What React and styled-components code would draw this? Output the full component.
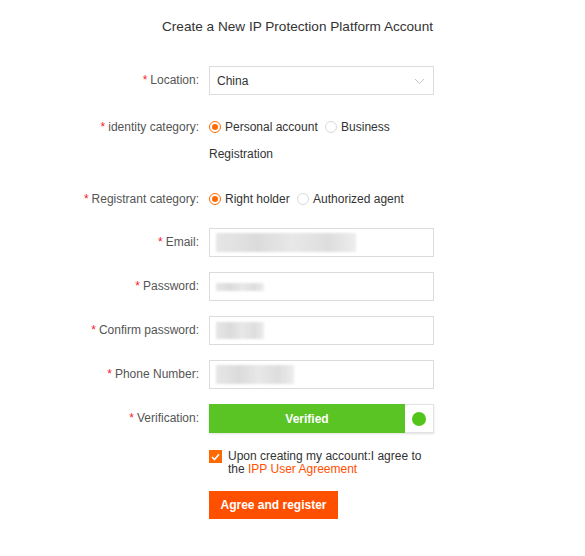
import React, { useState } from "react";
import styled, { createGlobalStyle } from "styled-components";

const GlobalStyle = createGlobalStyle`
  body {
    margin: 0;
    background: #ffffff;
    font-family: "Liberation Sans", Arial, sans-serif;
  }
`;

const Page = styled.div`
  width: 585px;
  height: 556px;
  background: #fff;
  overflow: hidden;
`;

const Title = styled.h1`
  margin: 17px 0 0 162px;
  font-size: 13.6px;
  line-height: 20px;
  font-weight: normal;
  color: #333;
`;

const Form = styled.form`
  display: flex;
  flex-direction: column;
  margin-top: 29px;
`;

const Row = styled.div`
  display: flex;
  align-items: ${(p) => (p.$top ? "flex-start" : "center")};
  margin-top: ${(p) => p.$mt ?? 15}px;
  min-height: 29px;
`;

const Label = styled.label`
  width: 199px;
  padding-right: 10px;
  flex: none;
  text-align: right;
  font-size: 12px;
  color: #555;
  line-height: ${(p) => p.$lh ?? 29}px;

  &::before {
    content: "*";
    color: #f5222d;
    margin-right: 3px;
  }
`;

const Control = styled.div`
  width: 225px;
  flex: none;
`;

const Select = styled.div`
  height: 29px;
  box-sizing: border-box;
  border: 1px solid #dcdcdc;
  display: flex;
  align-items: center;
  justify-content: space-between;
  padding: 1px 8px 0 7px;
  font-size: 12px;
  color: #333;
`;

const Input = styled.div`
  height: 29px;
  box-sizing: border-box;
  border: 1px solid #dcdcdc;
  display: flex;
  align-items: center;
  padding: 0 6px;
`;

const Blur = styled.div`
  height: ${(p) => p.$h}px;
  width: ${(p) => p.$w}px;
  background: linear-gradient(90deg, #e4e4e4 0%, #d8d8d8 30%, #e6e6e6 55%, #dadada 80%, #ececec 100%);
  filter: blur(1.2px);
  opacity: 0.9;
`;

const RadioGroup = styled.div`
  font-size: 12px;
  color: #333;
  line-height: ${(p) => p.$lh ?? 29}px;
`;

const RadioItem = styled.span`
  white-space: nowrap;
  margin-right: 4px;
`;

const RadioDot = styled.span`
  display: inline-block;
  vertical-align: -2px;
  width: 12px;
  height: 12px;
  box-sizing: border-box;
  border-radius: 50%;
  border: 1px solid ${(p) => (p.$on ? "#ff6a00" : "#dadada")};
  margin-right: 4px;
  position: relative;
  background: #fff;

  &::after {
    content: "";
    display: ${(p) => (p.$on ? "block" : "none")};
    position: absolute;
    left: 2px;
    top: 2px;
    width: 6px;
    height: 6px;
    border-radius: 50%;
    background: #ff6a00;
  }
`;

const Slider = styled.div`
  display: flex;
  height: 29px;
  box-shadow: 0 1px 2px rgba(0, 0, 0, 0.12);
`;

const SliderTrack = styled.div`
  flex: 1;
  background: #5ac424;
  color: #fff;
  font-size: 12px;
  font-weight: bold;
  display: flex;
  align-items: center;
  justify-content: center;
`;

const SliderKnob = styled.div`
  width: 29px;
  box-sizing: border-box;
  border: 1px solid #e3e3e3;
  border-left: none;
  background: #fff;
  display: flex;
  align-items: center;
  justify-content: center;

  &::after {
    content: "";
    width: 14px;
    height: 14px;
    border-radius: 50%;
    background: #52c41a;
  }
`;

const Agree = styled.div`
  display: flex;
  align-items: flex-start;
  margin: 17px 0 0 209px;
  width: 225px;
  font-size: 12px;
  line-height: 13px;
  color: #333;
`;

const CheckBox = styled.span`
  flex: none;
  width: 13px;
  height: 13px;
  margin: 0 6px 0 0;
  background: #ff6a00;
  display: flex;
  align-items: center;
  justify-content: center;
`;

const AgreeText = styled.p`
  margin: 0;
`;

const Link = styled.a`
  color: #ff5000;
  text-decoration: none;
`;

const Submit = styled.button`
  margin: 15px 0 0 209px;
  width: 129px;
  height: 28px;
  border: none;
  background: #ff5000;
  color: #fff;
  font-family: inherit;
  font-size: 12px;
  font-weight: bold;
  padding: 0;
  cursor: pointer;
`;

function Chevron() {
  return (
    <svg width="11" height="7" viewBox="0 0 11 7">
      <path d="M1 1 L5.5 5.5 L10 1" fill="none" stroke="#c8c8c8" strokeWidth="1" />
    </svg>
  );
}

function Check() {
  return (
    <svg width="9" height="8" viewBox="0 0 9 8">
      <path d="M1 4 L3.5 6.5 L8 1.2" fill="none" stroke="#fff" strokeWidth="1.6" />
    </svg>
  );
}

function Radio({ on, children }) {
  return (
    <RadioItem>
      <RadioDot $on={on} />
      {children}
    </RadioItem>
  );
}

const fields = [
  { label: "Email", w: 140, h: 19 },
  { label: "Password", w: 48, h: 8 },
  { label: "Confirm password", w: 48, h: 17 },
  { label: "Phone Number", w: 78, h: 19 },
];

function App() {
  const [agreed, setAgreed] = useState(true);

  return (
    <Page>
      <GlobalStyle />
      <Title>Create a New IP Protection Platform Account</Title>
      <Form onSubmit={(e) => e.preventDefault()}>
        <Row $mt={0}>
          <Label>Location:</Label>
          <Control>
            <Select>
              China
              <Chevron />
            </Select>
          </Control>
        </Row>

        <Row $top $mt={19}>
          <Label $lh={27}>identity category:</Label>
          <Control>
            <RadioGroup $lh={27}>
              <Radio on>Personal account</Radio> <Radio>Business</Radio> Registration
            </RadioGroup>
          </Control>
        </Row>

        <Row $mt={17}>
          <Label>Registrant category:</Label>
          <Control>
            <RadioGroup>
              <Radio on>Right holder</Radio> <Radio>Authorized agent</Radio>
            </RadioGroup>
          </Control>
        </Row>

        {fields.map((f, i) => (
          <Row key={f.label} $mt={i === 0 ? 14 : 15}>
            <Label>{f.label}:</Label>
            <Control>
              <Input>
                <Blur $w={f.w} $h={f.h} />
              </Input>
            </Control>
          </Row>
        ))}

        <Row>
          <Label>Verification:</Label>
          <Control>
            <Slider>
              <SliderTrack>Verified</SliderTrack>
              <SliderKnob />
            </Slider>
          </Control>
        </Row>

        <Agree onClick={() => setAgreed(!agreed)}>
          <CheckBox>{agreed && <Check />}</CheckBox>
          <AgreeText>
            Upon creating my account:I agree to the <Link href="#">IPP User Agreement</Link>
          </AgreeText>
        </Agree>

        <Submit type="submit">Agree and register</Submit>
      </Form>
    </Page>
  );
}

export default App;
